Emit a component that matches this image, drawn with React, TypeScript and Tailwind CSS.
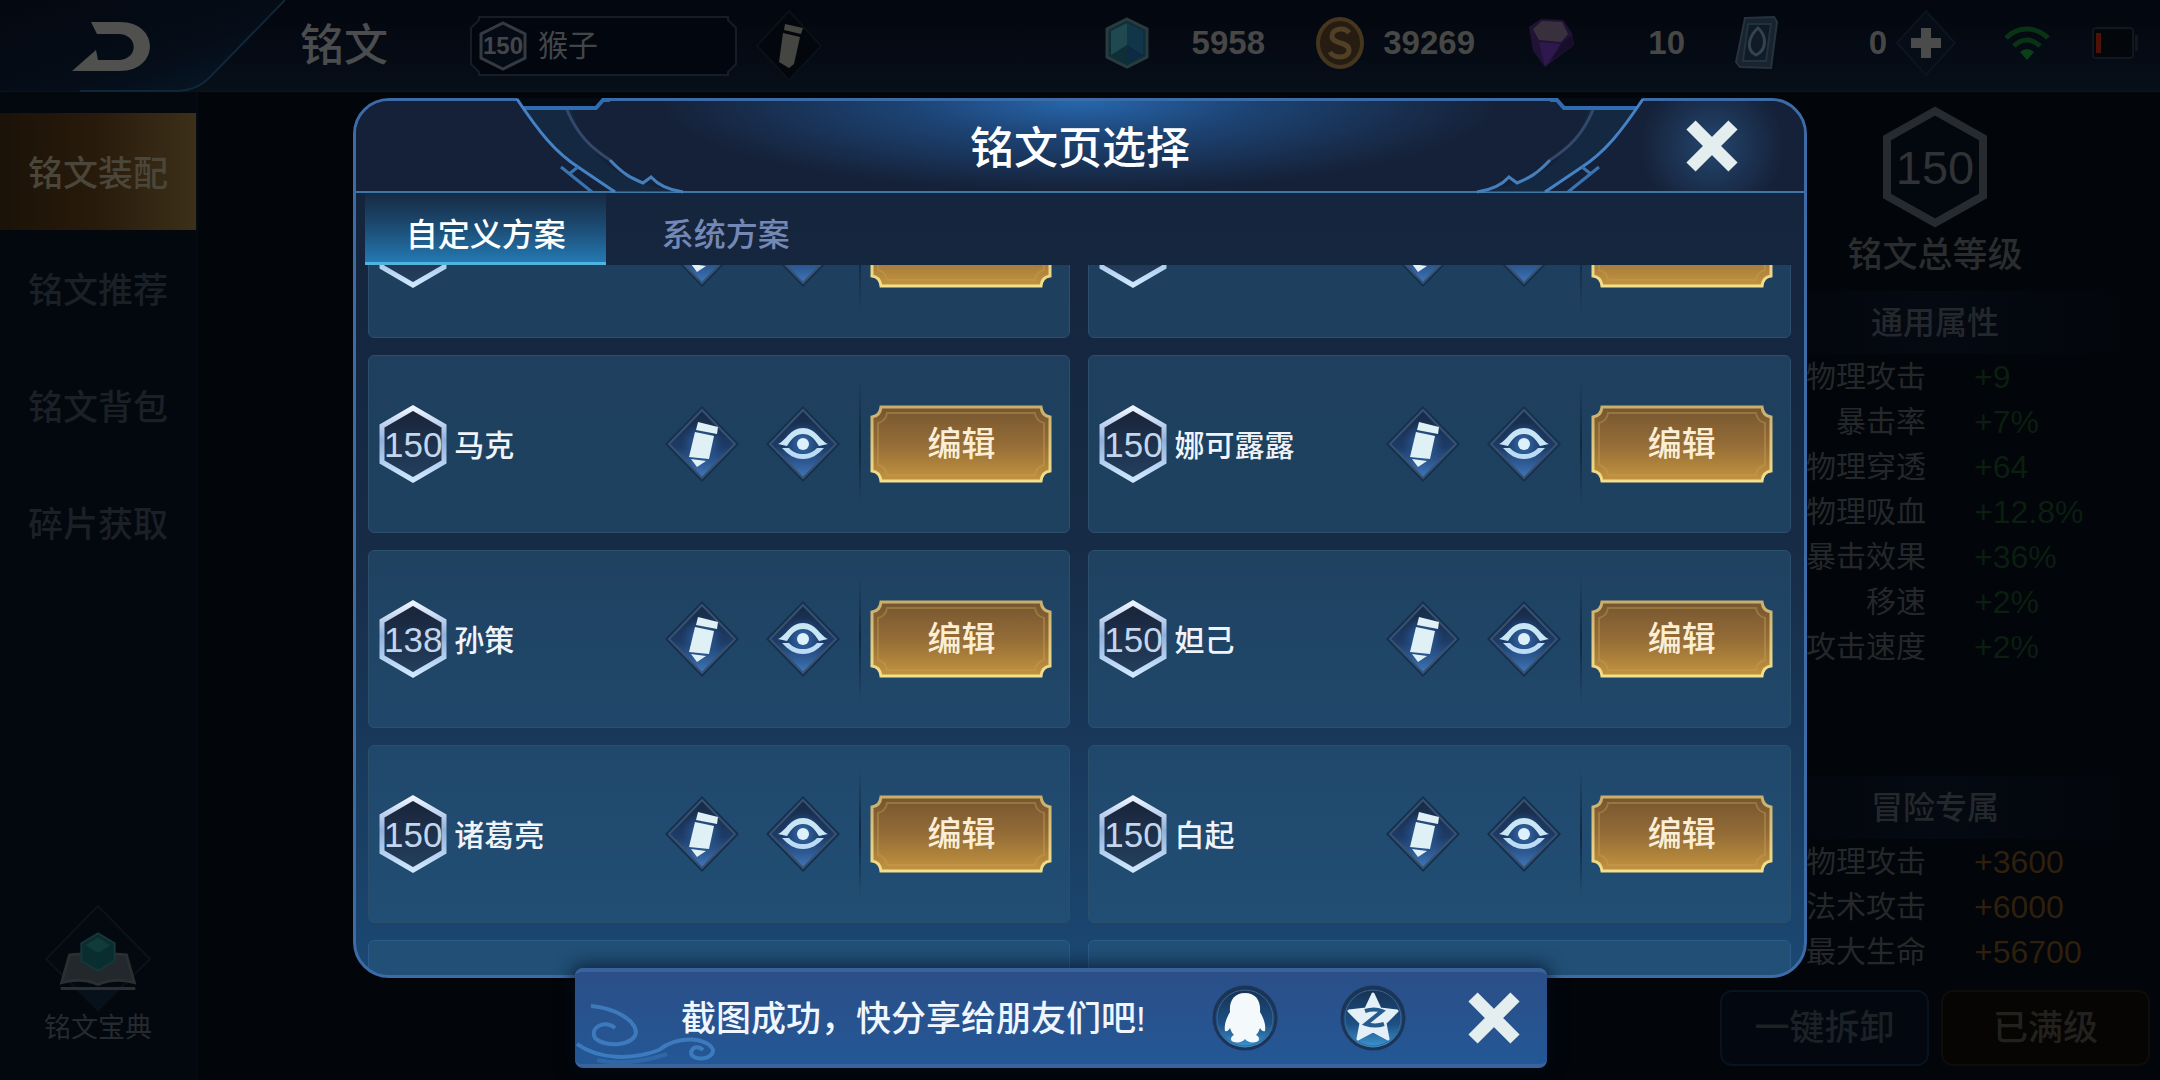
import React from "react";

type Page = { level?: number; name?: string };

const pages: Page[] = [
  {},
  {},
  { level: 150, name: "马克" },
  { level: 150, name: "娜可露露" },
  { level: 138, name: "孙策" },
  { level: 150, name: "妲己" },
  { level: 150, name: "诸葛亮" },
  { level: 150, name: "白起" },
];

const generalStats: [string, string][] = [
  ["物理攻击", "+9"],
  ["暴击率", "+7%"],
  ["物理穿透", "+64"],
  ["物理吸血", "+12.8%"],
  ["暴击效果", "+36%"],
  ["移速", "+2%"],
  ["攻击速度", "+2%"],
];

const adventureStats: [string, string][] = [
  ["物理攻击", "+3600"],
  ["法术攻击", "+6000"],
  ["最大生命", "+56700"],
];

/* Gradients shared by all icons */
function Defs() {
  return (
    <svg className="absolute h-0 w-0" aria-hidden="true">
      <defs>
        <linearGradient id="hexStroke" x1="0" y1="0" x2="0" y2="1">
          <stop offset="0" stopColor="#eef4ff" />
          <stop offset="0.45" stopColor="#8fb0dc" />
          <stop offset="1" stopColor="#cfe8ff" />
        </linearGradient>
        <linearGradient id="hexFill" x1="0" y1="0" x2="0" y2="1">
          <stop offset="0" stopColor="#182338" />
          <stop offset="1" stopColor="#24405f" />
        </linearGradient>
        <linearGradient id="diamondFill" x1="0" y1="0" x2="0" y2="1">
          <stop offset="0" stopColor="#172a45" />
          <stop offset="0.55" stopColor="#1d3c68" />
          <stop offset="1" stopColor="#3f78bd" />
        </linearGradient>
        <radialGradient id="iconGlow">
          <stop offset="0" stopColor="#3f78c0" stopOpacity="0.9" />
          <stop offset="1" stopColor="#2a5a9c" stopOpacity="0" />
        </radialGradient>
        <linearGradient id="goldFill" x1="0" y1="0" x2="0" y2="1">
          <stop offset="0" stopColor="#765630" />
          <stop offset="0.5" stopColor="#946c37" />
          <stop offset="1" stopColor="#c3943f" />
        </linearGradient>
        <linearGradient id="goldStroke" x1="0" y1="0" x2="0" y2="1">
          <stop offset="0" stopColor="#c9ae6c" />
          <stop offset="1" stopColor="#f3df8c" />
        </linearGradient>
        <linearGradient id="roundFill" x1="0" y1="0" x2="0" y2="1">
          <stop offset="0" stopColor="#16304f" />
          <stop offset="0.6" stopColor="#1d5084" />
          <stop offset="1" stopColor="#3f9bd8" />
        </linearGradient>
        <linearGradient id="backFill" x1="0" y1="0" x2="1" y2="1">
          <stop offset="0" stopColor="#040810" />
          <stop offset="0.6" stopColor="#050d18" />
          <stop offset="1" stopColor="#071a2b" />
        </linearGradient>
      </defs>
    </svg>
  );
}

function LevelHex({ level }: { level?: number }) {
  return (
    <span className="relative flex h-[78px] w-[68px] shrink-0 items-center justify-center">
      <svg viewBox="0 0 68 78" className="absolute inset-0 h-full w-full" aria-hidden="true">
        <path d="M34 3 L65 21 V57 L34 75 L3 57 V21 Z" fill="url(#hexFill)" stroke="url(#hexStroke)" strokeWidth="5" />
      </svg>
      {level !== undefined && <span className="relative text-[35px] leading-none text-[#c3d6ee]">{level}</span>}
    </span>
  );
}

function Diamond({ children }: { children: React.ReactNode }) {
  return (
    <svg viewBox="0 0 76 78" className="h-[78px] w-[76px]" aria-hidden="true">
      <path d="M38 1 L75 39 L38 77 L1 39 Z" fill="#14304f" />
      <path d="M38 5 L71 39 L38 73 L5 39 Z" fill="url(#diamondFill)" stroke="#39516f" strokeWidth="2" />
      <circle cx="38" cy="38" r="21" fill="url(#iconGlow)" />
      {children}
    </svg>
  );
}

function PencilIcon() {
  return (
    <Diamond>
      <g fill="#dff1f5">
        <path d="M34 17 L54 22 L53 29 L32 25 Z" />
        <path d="M31 27 L50 31 L45 54 L25 52 Z" />
        <path d="M27 54 L42 56 L33 62 Z" />
      </g>
    </Diamond>
  );
}

function EyeIcon() {
  return (
    <Diamond>
      <path d="M13 39 C22 35 25 23 38 23 C51 23 54 35 63 39 L54 41 C49 33 45 29 38 29 C31 29 27 33 22 41 Z" fill="#c9e6f4" />
      <path d="M17 43 H24 C28 47 32 49 38 49 C44 49 48 47 52 43 H59 C52 50 47 54 38 54 C29 54 24 50 17 43 Z" fill="#bcdcf5" />
      <circle cx="38" cy="39" r="6" fill="#dcf1fb" />
    </Diamond>
  );
}

function Cross() {
  return (
    <svg viewBox="0 0 52 52" className="h-[52px] w-[52px]" aria-hidden="true">
      <path d="M5 5 L47 47 M47 5 L5 47" stroke="#e4eeee" strokeWidth="13" />
    </svg>
  );
}

function PageCard({ page }: { page: Page }) {
  return (
    <li className="flex h-[178px] items-center rounded-md border border-[#2c4f6c] bg-[#27577c]/50 pr-[17px] pl-[10px]">
      <LevelHex level={page.level} />
      {page.name && (
        <span className="ml-[7px] pt-[3px] text-[30px] leading-9 font-medium text-[#f0f4fa]">{page.name}</span>
      )}
      <button type="button" aria-label="重命名" className="ml-auto">
        <PencilIcon />
      </button>
      <button type="button" aria-label="查看" className="ml-[25px]">
        <EyeIcon />
      </button>
      <span className="ml-[18px] h-[128px] w-[2px] bg-linear-to-b from-transparent via-[#12283f] to-transparent" />
      <button
        type="button"
        className="relative ml-[9px] flex h-[78px] w-[182px] items-center justify-center text-[34px] leading-none font-medium text-[#fbeed5]"
      >
        <svg viewBox="0 0 182 78" className="absolute inset-0 h-full w-full" aria-hidden="true">
          <path
            d="M11 2 H171 Q172 11 180 12 V66 Q172 67 171 76 H11 Q10 67 2 66 V12 Q10 11 11 2 Z"
            fill="url(#goldFill)"
            stroke="url(#goldStroke)"
            strokeWidth="3"
          />
          <path
            d="M17 8 H165 Q166 16 174 18 V60 Q166 62 165 70 H17 Q16 62 8 60 V18 Q16 16 17 8 Z"
            fill="none"
            stroke="#c69f54"
            strokeOpacity="0.4"
            strokeWidth="2"
          />
        </svg>
        <span className="relative">编辑</span>
      </button>
    </li>
  );
}

/* Circuit-like ornament in the dialog's upper corner */
function Ornament({ className }: { className: string }) {
  return (
    <svg viewBox="0 0 180 97" className={className} fill="none" aria-hidden="true">
      <path d="M8 0 H94 L87 10 H14 Z" fill="#050b14" />
      <path d="M14 11 H62 C80 62 112 86 172 94 H106 C60 66 40 44 14 11 Z" fill="#13304c" fillOpacity="0.5" />
      <path d="M15 10 H87 L94 2 H101" stroke="#2f6cb0" strokeWidth="4" />
      <path d="M8 1 C30 34 46 54 69 69 L106 94" stroke="#4583c6" strokeWidth="3" />
      <path d="M69 69 L60 76 M52 69 L83 94" stroke="#3a74b0" strokeWidth="3" />
      <path d="M58 12 C68 36 82 50 101 62" stroke="#33486a" strokeWidth="3" />
      <path d="M101 62 C114 76 122 80 134 85 L142 79 C150 88 160 92 174 94" stroke="#4580bd" strokeWidth="3" />
    </svg>
  );
}

function StatTable({ rows, tone }: { rows: [string, string][]; tone: string }) {
  return (
    <table className="w-full text-[30px]">
      <tbody>
        {rows.map(([label, value]) => (
          <tr key={label} className="h-[45px] leading-9">
            <th scope="row" className="w-[206px] p-0 text-right font-normal text-[#25282b]">
              {label}
            </th>
            <td className={"p-0 pl-[48px] text-[32px] " + tone}>{value}</td>
          </tr>
        ))}
      </tbody>
    </table>
  );
}

function Amount({ icon, value, width }: { icon: React.ReactNode; value: string; width: string }) {
  return (
    <div className={"flex items-center justify-between " + width}>
      {icon}
      <span className="text-[33px] leading-none font-bold text-[#474746]">{value}</span>
    </div>
  );
}

function TopBar() {
  return (
    <header className="flex h-[92px] shrink-0 items-center border-b border-[#0a1421] bg-linear-to-b from-[#03060e] to-[#070f19] pr-[22px]">
      <button type="button" aria-label="返回" className="h-[92px] w-[290px]">
        <svg viewBox="0 0 290 92" className="h-full w-full" aria-hidden="true">
          <path d="M0 0 H285 L210 77 Q197 91 175 91 H0 Z" fill="url(#backFill)" />
          <path d="M285 0 L210 77 Q197 91 175 91 H80" fill="none" stroke="#10273a" strokeWidth="2" />
          <path
            d="M91 22 H120 C160 22 160 71 120 71 H72 L96 50 L98 60 H118 C139 60 139 34 118 34 H97 Z"
            fill="#50504f"
          />
        </svg>
      </button>
      <h1 className="ml-[10px] text-[44px] leading-none font-medium text-[#4b4c4d]">铭文</h1>
      <button
        type="button"
        className="relative ml-[81px] flex h-[60px] w-[269px] items-center pl-[10px] text-[30px] text-[#434649]"
      >
        <svg viewBox="0 0 269 60" className="absolute inset-0 h-full w-full" aria-hidden="true">
          <path
            d="M10 1 H259 V4 L267 12 V48 L259 56 V59 H10 V56 L2 48 V12 L10 4 Z"
            fill="#02060f"
            stroke="#141d28"
            strokeWidth="2"
          />
        </svg>
        <span className="relative flex h-[50px] w-[48px] items-center justify-center">
          <svg viewBox="0 0 48 50" className="absolute inset-0 h-full w-full" aria-hidden="true">
            <path d="M24 2 L46 13 V37 L24 48 L2 37 V13 Z" fill="#050b14" stroke="#343a41" strokeWidth="3" />
          </svg>
          <span className="relative text-[24px] leading-none font-bold">150</span>
        </span>
        <span className="relative ml-[11px] leading-none">猴子</span>
      </button>
      <button type="button" aria-label="重命名" className="ml-[17px]">
        <svg viewBox="0 0 68 76" className="h-[76px] w-[68px]" aria-hidden="true">
          <path d="M34 3 L66 38 L34 72 L2 38 Z" fill="#03060c" stroke="#0b1119" strokeWidth="2" />
          <path d="M30 16 L48 20 L46 26 L29 22 Z M28 25 L45 29 L39 56 L34 60 L24 54 Z" fill="#454542" />
        </svg>
      </button>
      <div className="ml-auto flex items-center pb-[6px]">
        <div className="flex items-center gap-[50px]">
          <Amount
            value="5958"
            width="w-[160px]"
            icon={
              <svg viewBox="0 0 44 52" className="h-[52px] w-[44px] opacity-80" aria-hidden="true">
                <path d="M22 2 L42 12 V40 L22 50 L2 40 V12 Z" fill="#123840" stroke="#34474b" strokeWidth="3" />
                <path d="M22 6 L38 14 V38 L22 28 Z" fill="#154257" />
                <path d="M22 6 L6 14 V38 L22 28 Z" fill="#265860" />
                <path d="M22 28 L38 38 L22 46 Z" fill="#0f3350" />
              </svg>
            }
          />
          <Amount
            value="39269"
            width="w-[160px]"
            icon={
              <svg viewBox="0 0 50 54" className="h-[54px] w-[50px] opacity-90" aria-hidden="true">
                <ellipse cx="25" cy="27" rx="22" ry="24" fill="#2a1f12" stroke="#4f3b20" strokeWidth="4" />
                <path
                  d="M34 17 C30 11 17 12 17 20 C17 29 34 25 34 34 C34 43 19 43 15 36"
                  fill="none"
                  stroke="#5a4628"
                  strokeWidth="5"
                />
              </svg>
            }
          />
          <Amount
            value="10"
            width="w-[160px]"
            icon={
              <svg viewBox="0 0 50 52" className="h-[52px] w-[50px] opacity-80" aria-hidden="true">
                <path d="M4 10 L16 2 L38 3 L47 16 L49 28 L20 50 L8 34 Z" fill="#291640" />
                <path d="M8 12 L17 4 L37 5 L43 17 L36 25 L14 23 Z" fill="#463c48" />
                <path d="M14 25 L36 27 L20 50 Z" fill="#3a1c5c" />
                <path d="M36 27 L47 18 L48 28 L26 44 Z" fill="#1c0f30" />
              </svg>
            }
          />
          <Amount
            value="0"
            width="w-[152px]"
            icon={
              <svg viewBox="0 0 44 54" className="h-[54px] w-[44px] opacity-80" aria-hidden="true">
                <path d="M10 2 L39 1 L42 6 L36 52 L5 51 L1 46 Z" fill="#1d2a36" stroke="#2f3d48" strokeWidth="2" />
                <path d="M13 8 H36 L31 45 H8 Z" fill="#13202c" stroke="#2b3c4a" strokeWidth="2" />
                <path d="M23 12 C32 20 32 34 21 39 C10 34 14 20 23 12 Z" fill="none" stroke="#41525f" strokeWidth="3" />
              </svg>
            }
          />
        </div>
        <button type="button" aria-label="增加" className="ml-[8px]">
          <svg viewBox="0 0 62 76" className="h-[76px] w-[62px]" aria-hidden="true">
            <path d="M31 6 L60 38 L31 70 L2 38 Z" fill="#060d17" stroke="#0c1420" strokeWidth="2" />
            <path d="M26 23 H36 V33 H46 V43 H36 V53 H26 V43 H16 V33 H26 Z" fill="#4a4b4a" />
          </svg>
        </button>
        <svg viewBox="0 0 48 36" className="ml-[46px] h-[36px] w-[48px]" fill="none" stroke="#093314" strokeWidth="5" aria-hidden="true">
          <path d="M3 13 C15 1 33 1 45 13" />
          <path d="M11 21 C19 13 29 13 37 21" />
          <path d="M24 35 L17 27 Q24 21 31 27 Z" fill="#0b3f17" stroke="none" />
        </svg>
        <svg viewBox="0 0 46 32" className="ml-[41px] h-[32px] w-[46px]" aria-hidden="true">
          <rect x="1" y="1" width="40" height="30" rx="3" fill="#03060b" stroke="#10171f" strokeWidth="2" />
          <rect x="43" y="8" width="3" height="16" fill="#10171f" />
          <rect x="4" y="6" width="5" height="20" fill="#4e1207" />
        </svg>
      </div>
    </header>
  );
}

function Sidebar() {
  const item = "flex h-[117px] w-full items-center justify-center pt-[5px] text-[35px] font-medium ";
  return (
    <nav className="flex w-[198px] shrink-0 flex-col border-r-2 border-[#060b13] bg-[#03070e] pt-[21px] pb-[36px]">
      <button type="button" className={item + "bg-linear-to-r from-[#1b1208] via-[#291b0b] to-[#3c3019] text-[#4b463a]"}>
        铭文装配
      </button>
      {["铭文推荐", "铭文背包", "碎片获取"].map((t) => (
        <button key={t} type="button" className={item + "text-[#1a2026]"}>
          {t}
        </button>
      ))}
      <button type="button" className="mt-auto flex flex-col items-center text-[27px] leading-8 text-[#262a2e]">
        <svg viewBox="0 0 110 110" className="h-[108px] w-[108px]" aria-hidden="true">
          <path d="M55 2 L108 56 L55 108 L2 56 Z" fill="#040910" stroke="#0c1218" strokeWidth="2" />
          <path d="M34 87 H76 L55 108 Z" fill="#06111c" />
          <path
            d="M26 52 C38 50 48 52 55 56 C62 52 72 50 84 52 L92 80 C78 76 66 77 55 82 C44 77 32 76 18 80 Z"
            fill="#22282b"
            stroke="#2b2f32"
            strokeWidth="3"
          />
          <path d="M17 86 H93" stroke="#2b2f32" strokeWidth="3" />
          <path d="M55 30 L72 40 V58 L55 68 L38 58 V40 Z" fill="#0a2e2f" stroke="#183639" strokeWidth="2" />
          <path d="M55 34 L68 42 L55 50 L42 42 Z" fill="#103b39" />
        </svg>
        铭文宝典
      </button>
    </nav>
  );
}

function StatHeading({ children }: { children: string }) {
  return (
    <h3 className="flex h-[63px] items-center justify-center bg-linear-to-r from-transparent via-[#050912] to-transparent text-[32px] font-medium text-[#24282d]">
      {children}
    </h3>
  );
}

function StatsPanel() {
  return (
    <aside className="mr-[10px] ml-auto flex w-[430px] shrink-0 flex-col pt-[14px] pb-[14px]">
      <div className="relative mx-auto flex h-[122px] w-[106px] items-center justify-center">
        <svg viewBox="0 0 106 122" className="absolute inset-0 h-full w-full" aria-hidden="true">
          <path d="M53 5 L101 32 V90 L53 117 L5 90 V32 Z" fill="#03070e" stroke="#272a2e" strokeWidth="8" />
        </svg>
        <span className="relative text-[47px] leading-none text-[#303235]">150</span>
      </div>
      <h2 className="mt-[7px] text-center text-[35px] leading-10 font-medium text-[#2a2c2e]">铭文总等级</h2>
      <div className="mt-[16px]">
        <StatHeading>通用属性</StatHeading>
        <StatTable rows={generalStats} tone="text-[#0b1e10]" />
      </div>
      <div className="mt-auto">
        <StatHeading>冒险专属</StatHeading>
        <StatTable rows={adventureStats} tone="text-[#2e200d]" />
      </div>
      <div className="mt-[16px] grid grid-cols-2 gap-3 text-[35px] font-medium">
        <button type="button" className="h-[76px] rounded-xl border-2 border-[#09131d] bg-[#030810] text-[#1b2125]">
          一键拆卸
        </button>
        <button type="button" className="h-[76px] rounded-xl border-2 border-[#0e0d0a] bg-[#060503] text-[#22211e]">
          已满级
        </button>
      </div>
    </aside>
  );
}

function PageDialog() {
  return (
    <section
      role="dialog"
      aria-label="铭文页选择"
      className="flex h-full w-[67.3%] flex-col rounded-[36px] border-3 border-[#3b6ca8] bg-linear-to-b from-[#14233a] via-[#162b45] to-[#1b4873]"
    >
      <header className="relative flex h-[92px] shrink-0 items-center justify-center rounded-t-[33px] border-b-2 border-[#3d77a8] bg-[radial-gradient(ellipse_420px_90px_at_50%_0%,#2767ad_0%,#1d4475_40%,#152138_100%)]">
        <Ornament className="absolute -top-[3px] left-[153px] h-[97px] w-[180px]" />
        <Ornament className="absolute -top-[3px] right-[153px] h-[97px] w-[180px] -scale-x-100" />
        <h2 className="relative pt-[5px] text-[44px] leading-none font-medium text-white">铭文页选择</h2>
        <button
          type="button"
          aria-label="关闭"
          className="absolute right-0 flex h-full w-[184px] items-center justify-center bg-[radial-gradient(circle_at_50%_50%,#24466f_0%,transparent_70%)]"
        >
          <Cross />
        </button>
      </header>
      <div role="tablist" className="flex h-[72px] shrink-0 items-stretch pl-[9px] text-[32px] font-medium">
        <button
          type="button"
          role="tab"
          aria-selected="true"
          className="w-[241px] border-b-3 border-[#4fb4e0] bg-linear-to-b from-[#162a43] via-[#1c4c74] to-[#2379b2] pt-[14px] text-white"
        >
          自定义方案
        </button>
        <button type="button" role="tab" aria-selected="false" className="w-[239px] pt-[11px] text-[#7488b6]">
          系统方案
        </button>
      </div>
      <div className="min-h-0 flex-1 overflow-hidden rounded-b-[33px] pr-[13px] pl-[12px]">
        <ul className="-mt-[105px] grid grid-cols-2 gap-x-[18px] gap-y-[17px]">
          {pages.map((p, i) => (
            <PageCard key={i} page={p} />
          ))}
          <li className="h-[178px] rounded-md border border-[#2d5a88] bg-[#27577c]/50" />
          <li className="h-[178px] rounded-md border border-[#2d5a88] bg-[#27577c]/50" />
        </ul>
      </div>
    </section>
  );
}

function ShareToast() {
  return (
    <div
      role="status"
      className="relative flex h-[100px] w-[972px] items-center overflow-hidden rounded-lg border-y-4 border-[#3a639c] bg-linear-to-b from-[#2b4f88] to-[#235795] pr-[27px] pl-[106px] shadow-[0_0_16px_4px_rgba(4,14,30,0.6)]"
    >
      <svg viewBox="0 0 150 70" className="absolute bottom-0 left-0 h-[70px] w-[150px]" fill="none" stroke="#4a8fd6" strokeWidth="4" strokeOpacity="0.65" aria-hidden="true">
        <path d="M16 12 C40 14 60 26 61 38 C60 52 30 54 20 44 C14 32 32 26 40 34" />
        <path d="M2 50 C24 66 58 66 84 56 C104 40 134 44 138 56 C139 66 116 68 116 58 C118 52 124 52 128 56" />
        <path d="M22 66 C50 72 74 66 92 60" strokeOpacity="0.3" />
      </svg>
      <p className="relative text-[35px] leading-none font-medium whitespace-nowrap text-[#f0f6ff]">
        截图成功，快分享给朋友们吧!
      </p>
      <button type="button" aria-label="分享到QQ" className="ml-auto">
        <svg viewBox="0 0 66 66" className="h-[66px] w-[66px]" aria-hidden="true">
          <circle cx="33" cy="33" r="31" fill="url(#roundFill)" stroke="#1c3557" strokeWidth="3" />
          <circle cx="33" cy="33" r="28" fill="none" stroke="#3a6593" strokeWidth="1" />
          <path
            d="M33 8 C22 8 17 16 18 27 C14 34 12 40 13 46 C15 47 17 45 18 43 C19 46 20 48 22 50 C18 52 18 56 22 57 C26 58 31 57 33 54 C35 57 40 58 44 57 C48 56 48 52 44 50 C46 48 47 46 48 43 C49 45 51 47 53 46 C54 40 52 34 48 27 C49 16 44 8 33 8 Z"
            fill="#f4f9fc"
          />
        </svg>
      </button>
      <button type="button" aria-label="分享到QQ空间" className="ml-[62px]">
        <svg viewBox="0 0 66 66" className="h-[66px] w-[66px]" aria-hidden="true">
          <circle cx="33" cy="33" r="31" fill="url(#roundFill)" stroke="#1c3557" strokeWidth="3" />
          <circle cx="33" cy="33" r="28" fill="none" stroke="#3a6593" strokeWidth="1" />
          <path
            d="M33 9 L40 24 L57 26 L45 38 L48 54 L33 46 L18 54 L21 38 L9 26 L26 24 Z"
            fill="#e4f0f7"
            stroke="#e4f0f7"
            strokeWidth="3"
            strokeLinejoin="round"
          />
          <path d="M25 26 C31 24 37 24 42 26 L26 39 C32 41 38 41 44 39" fill="none" stroke="#245a8e" strokeWidth="4" />
        </svg>
      </button>
      <button type="button" aria-label="关闭提示" className="ml-[62px]">
        <Cross />
      </button>
    </div>
  );
}

export default function App() {
  return (
    <div className="relative flex h-screen flex-col overflow-hidden bg-[#020509] font-['Liberation_Sans','Noto_Sans_CJK_SC',sans-serif]">
      <Defs />
      <TopBar />
      <main className="flex min-h-0 flex-1">
        <Sidebar />
        <StatsPanel />
      </main>
      <div className="absolute inset-0 flex justify-center pt-[98px] pb-[102px]">
        <PageDialog />
      </div>
      <div className="absolute inset-x-0 bottom-3 flex justify-center pr-[38px]">
        <ShareToast />
      </div>
    </div>
  );
}
